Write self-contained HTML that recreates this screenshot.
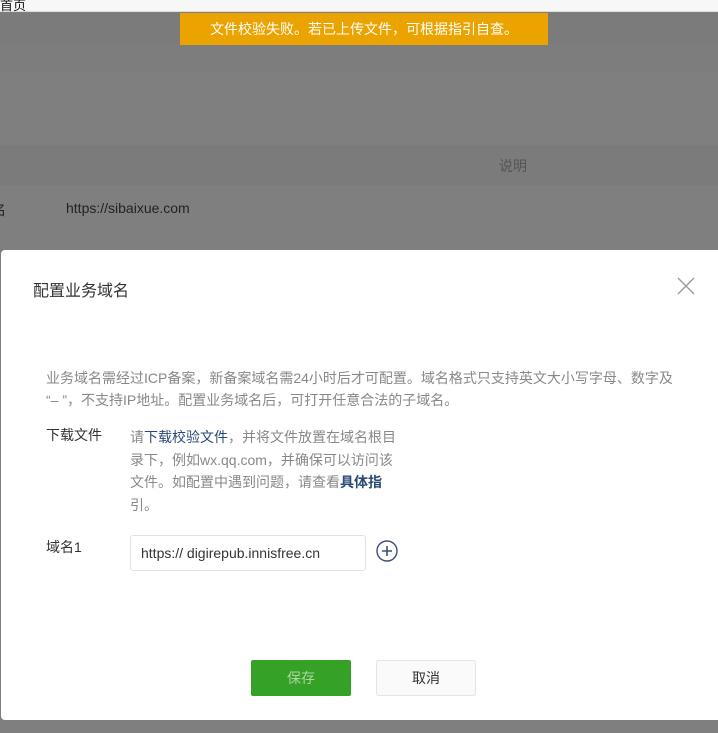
<!DOCTYPE html>
<html><head><meta charset="utf-8"><style>
*{margin:0;padding:0;box-sizing:border-box}
body{width:718px;height:733px;overflow:hidden;position:relative;background:#7f7f7f;font-family:"Liberation Sans","Noto Sans CJK SC",sans-serif}
.a{position:absolute}
.t{font-size:14px;color:#888;line-height:22px}
</style></head><body>
<div class="a" style="left:0;top:0;width:718px;height:12px;background:#f7f7f7;border-bottom:1px solid #ddd"></div>
<div class="a" style="left:0;top:-5px;font-size:13px;color:#111">首页</div>
<div class="a" style="left:0;top:13px;width:718px;height:30px;background:#7b7b7b"></div>
<div class="a" style="left:0;top:43px;width:718px;height:30px;background:#7c7d7c"></div>
<div class="a" style="left:0;top:145px;width:718px;height:40px;background:#7b7b7b"></div>
<div class="a" style="left:180px;top:13px;width:368px;height:32px;background:#eba300;color:#fff;font-size:14px;text-align:center;line-height:32px">文件校验失败。若已上传文件，可根据指引自查。</div>
<div class="a" style="left:499px;top:156px;font-size:14px;color:#555">说明</div>
<div class="a" style="left:-8px;top:200px;font-size:14px;color:#222">名</div>
<div class="a" style="left:66px;top:200px;font-size:14px;color:#222">https://sibaixue.com</div>
<div class="a" style="left:1px;top:250px;width:720px;height:470px;background:#fff;border-radius:4px 0 0 4px"></div>
<div class="a" style="left:33px;top:277px;font-size:16px;color:#333">配置业务域名</div>
<svg class="a" style="left:677px;top:277px" width="18" height="18"><path d="M1 1L17 17M17 1L1 17" stroke="#999" stroke-width="1.3" fill="none"/></svg>
<div class="a t" style="left:46px;top:367px;width:660px">业务域名需经过ICP备案，新备案域名需24小时后才可配置。域名格式只支持英文大小写字母、数字及<br>“– ”，不支持IP地址。配置业务域名后，可打开任意合法的子域名。</div>
<div class="a" style="left:46px;top:424px;font-size:14px;color:#333;line-height:22px">下载文件</div>
<div class="a t" style="left:130px;top:426px;width:266px;line-height:22.5px">请<span style="color:#2b4a78">下载校验文件</span>，并将文件放置在域名根目录下，例如wx.qq.com，并确保可以访问该文件。如配置中遇到问题，请查看<span style="color:#2b4a78;font-weight:bold">具体指</span><br>引。</div>
<div class="a" style="left:46px;top:536px;font-size:14px;color:#333;line-height:22px">域名1</div>
<div class="a" style="left:130px;top:535px;width:236px;height:36px;border:1px solid #e2e2e2;border-radius:3px;font-size:14px;color:#333;line-height:34px;padding-left:10px">https:// digirepub.innisfree.cn</div>
<svg class="a" style="left:376px;top:540px" width="22" height="22"><circle cx="11" cy="11" r="10" stroke="#3e4e7a" stroke-width="1.4" fill="none"/><path d="M6 11H16M11 6V16" stroke="#3e4e7a" stroke-width="1.6"/></svg>
<div class="a" style="left:251px;top:660px;width:100px;height:36px;background:#35a126;border-radius:2px;color:#a8d8a0;font-size:14px;text-align:center;line-height:36px">保存</div>
<div class="a" style="left:376px;top:660px;width:100px;height:36px;background:#fafafa;border:1px solid #e2e4e8;border-radius:3px;color:#333;font-size:14px;text-align:center;line-height:34px">取消</div>
</body></html>
